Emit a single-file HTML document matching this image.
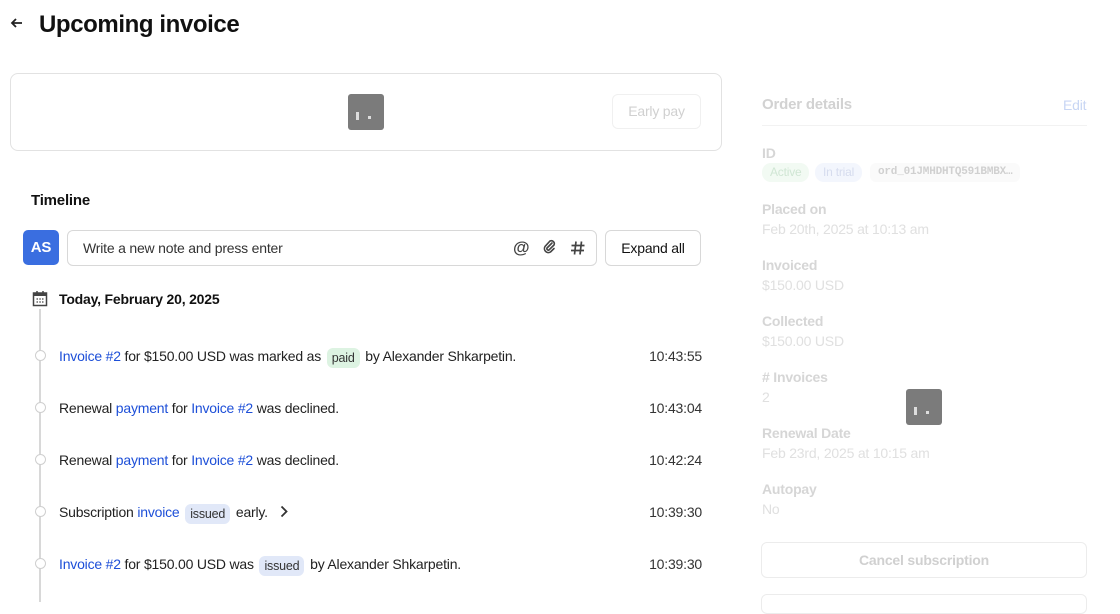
<!DOCTYPE html>
<html><head><meta charset="utf-8"><style>
*{box-sizing:border-box;margin:0;padding:0}
body{width:1120px;height:602px;overflow:hidden;background:#fff;font-family:"Liberation Sans",sans-serif;color:#222;position:relative;font-size:14px;letter-spacing:-0.2px}
.a{position:absolute}
.blue{color:#1d4fd8}
.tag{display:inline-block;padding:1px 5px;border-radius:6px;font-size:12.5px;line-height:18px;margin:0 2px;color:#333;vertical-align:-1px}
.row{position:absolute;left:59px;width:643px;height:20px;line-height:20px}
.row .t{position:absolute;right:0;top:0;color:#333}
.dot{position:absolute;left:35px;width:11px;height:11px;border:1.5px solid #cfcfcf;border-radius:50%;background:#fff}
.lab{position:absolute;left:762px;font-size:14px;font-weight:bold;color:#d6d6d6}
.val{position:absolute;left:762px;font-size:14px;color:#e0e0e0}
.loader{position:absolute;width:36px;height:36px;background:#7b7b7b;border-radius:3px}
.loader:before{content:"";position:absolute;left:8px;top:18px;width:3px;height:8px;background:#ddd}
.loader:after{content:"";position:absolute;left:20px;top:22px;width:3px;height:3px;background:#ddd}
</style></head><body>
<svg class="a" style="left:10px;top:16px" width="14" height="14" viewBox="0 0 14 14"><path d="M12 7H2M6 3L2 7l4 4" stroke="#222" stroke-width="1.8" fill="none"/></svg>
<div class="a" style="left:39px;top:11px;font-size:24px;font-weight:bold;color:#111;letter-spacing:-0.4px">Upcoming invoice</div>

<div class="a" style="left:10px;top:73px;width:712px;height:78px;border:1px solid #e2e2e2;border-radius:8px"></div>
<div class="loader" style="left:348px;top:94px"></div>
<div class="a" style="left:612px;top:94px;width:89px;height:35px;border:1px solid #f0f0f0;border-radius:6px;color:#d0d0d0;text-align:center;line-height:33px">Early pay</div>

<div class="a" style="left:31px;top:192px;font-size:15px;font-weight:bold;color:#111">Timeline</div>
<div class="a" style="left:23px;top:230px;width:36px;height:35px;background:#3a6ee0;border-radius:5px;color:#fff;font-weight:bold;font-size:15px;text-align:center;line-height:35px">AS</div>
<div class="a" style="left:67px;top:230px;width:530px;height:36px;border:1px solid #d8d8d8;border-radius:6px;padding-left:15px;line-height:34px;color:#333">Write a new note and press enter</div>
<div class="a" style="left:513px;top:238px;font-size:17px;color:#444;font-weight:bold">@</div>
<svg class="a" style="left:542px;top:239px" width="16" height="16" viewBox="0 0 16 16"><path d="M10 4L5 9a1.5 1.5 0 0 0 2 2l5-5a3 3 0 0 0-4-4L3 7.5a4 4 0 0 0 5.5 5.5L12 9.5" stroke="#444" stroke-width="1.6" fill="none" stroke-linecap="round"/></svg>
<svg class="a" style="left:570px;top:240px" width="16" height="16" viewBox="0 0 16 16"><path d="M6 1.5L4.5 14.5M11.5 1.5L10 14.5M1.5 5.5h13M1 10.5h13" stroke="#444" stroke-width="1.7" fill="none"/></svg>
<div class="a" style="left:605px;top:230px;width:96px;height:36px;border:1px solid #d8d8d8;border-radius:6px;text-align:center;line-height:34px;color:#111">Expand all</div>

<svg class="a" style="left:32px;top:290px" width="16" height="17" viewBox="0 0 16 17"><rect x="1.5" y="3" width="13" height="12.5" fill="none" stroke="#444" stroke-width="1.5"/><rect x="1.5" y="3" width="13" height="3" fill="#444"/><path d="M5 1v4M11 1v4" stroke="#444" stroke-width="1.5"/><path d="M4.5 9h1.5M7.3 9h1.5M10 9h1.5M4.5 12h1.5M7.3 12h1.5M10 12h1.5" stroke="#444" stroke-width="1.2"/></svg>
<div class="a" style="left:59px;top:291px;font-weight:bold;color:#111">Today, February 20, 2025</div>
<div class="a" style="left:39px;top:309px;width:2px;height:293px;background:#d8d8d8"></div>

<div class="dot" style="top:350px"></div>
<div class="row" style="top:346px"><span class="blue">Invoice #2</span> for $150.00 USD was marked as <span class="tag" style="background:#ddf3e2">paid</span> by Alexander Shkarpetin.<span class="t">10:43:55</span></div>
<div class="dot" style="top:402px"></div>
<div class="row" style="top:398px">Renewal <span class="blue">payment</span> for <span class="blue">Invoice #2</span> was declined.<span class="t">10:43:04</span></div>
<div class="dot" style="top:454px"></div>
<div class="row" style="top:450px">Renewal <span class="blue">payment</span> for <span class="blue">Invoice #2</span> was declined.<span class="t">10:42:24</span></div>
<div class="dot" style="top:506px"></div>
<div class="row" style="top:502px">Subscription <span class="blue">invoice</span> <span class="tag" style="background:#e1e8f8">issued</span> early.<svg style="margin-left:12px;vertical-align:-1px" width="8" height="13" viewBox="0 0 8 13"><path d="M1.5 1.5l5 5-5 5" stroke="#333" stroke-width="1.8" fill="none"/></svg><span class="t">10:39:30</span></div>
<div class="dot" style="top:558px"></div>
<div class="row" style="top:554px"><span class="blue">Invoice #2</span> for $150.00 USD was <span class="tag" style="background:#e1e8f8">issued</span> by Alexander Shkarpetin.<span class="t">10:39:30</span></div>

<div class="a" style="left:762px;top:96px;font-size:15px;font-weight:bold;color:#d2d2d2">Order details</div>
<div class="a" style="left:1063px;top:97px;font-size:14px;color:#c8d6f4">Edit</div>
<div class="a" style="left:762px;top:125px;width:325px;height:1px;background:#f2f2f2"></div>
<div class="lab" style="top:145px">ID</div>
<div class="a" style="left:762px;top:163px;height:19px;padding:0 8px;background:#f2faf3;border-radius:9px;font-size:12px;line-height:19px;color:#d0e6d4">Active</div>
<div class="a" style="left:815px;top:163px;height:19px;padding:0 8px;background:#f3f6fd;border-radius:9px;font-size:12px;line-height:19px;color:#d6dcee">In trial</div>
<div class="a" style="left:870px;top:163px;height:19px;padding:0 8px;background:#fafafa;border-radius:6px;font-family:'Liberation Mono',monospace;font-weight:bold;font-size:11px;line-height:19px;color:#d0d0d0">ord_01JMHDHTQ591BMBX…</div>
<div class="lab" style="top:201px">Placed on</div><div class="val" style="top:221px">Feb 20th, 2025 at 10:13 am</div>
<div class="lab" style="top:257px">Invoiced</div><div class="val" style="top:277px">$150.00 USD</div>
<div class="lab" style="top:313px">Collected</div><div class="val" style="top:333px">$150.00 USD</div>
<div class="lab" style="top:369px"># Invoices</div><div class="val" style="top:389px">2</div>
<div class="lab" style="top:425px">Renewal Date</div><div class="val" style="top:445px">Feb 23rd, 2025 at 10:15 am</div>
<div class="lab" style="top:481px">Autopay</div><div class="val" style="top:501px">No</div>
<div class="loader" style="left:906px;top:389px"></div>
<div class="a" style="left:761px;top:542px;width:326px;height:36px;border:1px solid #ececec;border-radius:6px;text-align:center;line-height:34px;color:#d0d0d0;font-weight:bold">Cancel subscription</div>
<div class="a" style="left:761px;top:594px;width:326px;height:20px;border:1px solid #ececec;border-radius:6px"></div>
</body></html>
